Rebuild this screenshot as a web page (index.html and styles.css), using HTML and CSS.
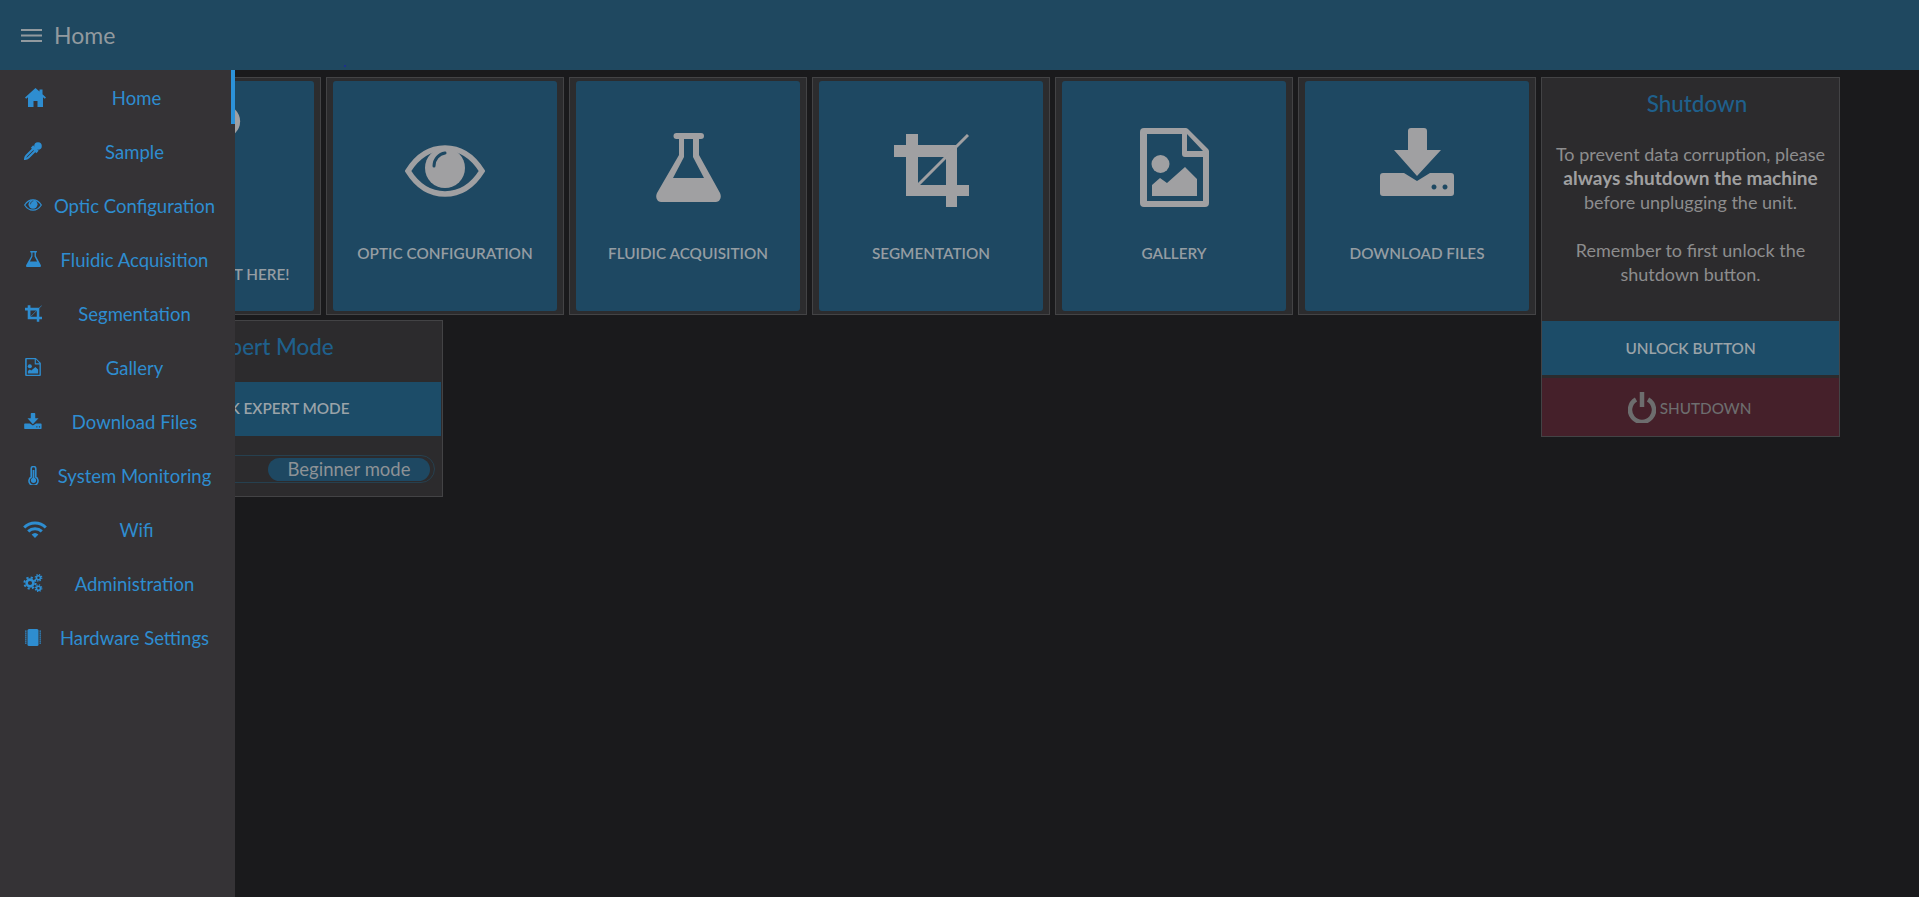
FILE: index.html
```html
<!DOCTYPE html>
<html lang="en">
<head>
<meta charset="utf-8">
<title>Home</title>
<link rel="stylesheet" href="styles.css">
</head>
<body>
<svg class="defs" width="0" height="0" aria-hidden="true">
  <symbol id="i-home" viewBox="0 0 21 19"><path d="M10.5 0L0 9.5l1.2 1.3L3 9.3V19h5.5v-6h4v6H18V9.3l1.8 1.5L21 9.5 17.5 6.3V1.5h-3v2.1z"/></symbol>
  <symbol id="i-dropper" viewBox="0 0 18 18"><circle cx="14" cy="4" r="3.8"/><path d="M8 4.5l5.500 5.500" fill="none" stroke="currentColor" stroke-width="3.200"/><path d="M9.500 6.500L2.500 13.500Q1 15 1 17Q3 17 4.500 15.500L11.500 8.500" fill="none" stroke="currentColor" stroke-width="2"/></symbol>
  <symbol id="i-eye" viewBox="0 0 80 52"><path d="M3 26C13 10 26 3 40 3s27 7 37 23C67 42 54 49 40 49S13 42 3 26Z" fill="none" stroke="currentColor" stroke-width="5.5"/><circle cx="40" cy="23" r="20"/><path d="M29 21c0-7 5-12 11-13" class="cut" fill="none" stroke-width="3" stroke-linecap="round"/></symbol>
  <symbol id="i-flask" viewBox="0 0 65 69"><path fill-rule="evenodd" d="M20 0h25a3 3 0 0 1 0 6h-2v16L64 60c2 4 0 9-4 9H5c-4 0-6-5-4-9L23 22V6h-2.500a3 3 0 0 1 0-6zM28 6v18L17 45h31L37 24V6z"/></symbol>
  <symbol id="i-crop" viewBox="0 0 75 73"><path fill-rule="evenodd" d="M12 0h12v11h39v40h12v11H63v11H52V62H12V23H0V11h12zM24 23v28h28V23z"/><path d="M74 1L24 51" fill="none" stroke="currentColor" stroke-width="3"/></symbol>
  <symbol id="i-file" viewBox="0 0 69 79"><path fill-rule="evenodd" d="M4 0h41a4 4 0 0 1 3 1L68 21a4 4 0 0 1 1 3v51a4 4 0 0 1-4 4H4a4 4 0 0 1-4-4V4a4 4 0 0 1 4-4zM7 6v67h56V29H45a3 3 0 0 1-3-3V6zM47 6v17h16z"/><circle cx="20.500" cy="36" r="9"/><path d="M12 68V57l8-7 7 5 18-16 12 12v17z"/></symbol>
  <symbol id="i-download" viewBox="0 0 75 68"><path d="M31 0h13a3 3 0 0 1 3 3v19h14L37 48 14 22h14V3a3 3 0 0 1 3-3z"/><path fill-rule="evenodd" d="M3 45h21l13 8 13-8h21a3 3 0 0 1 3 3v17a3 3 0 0 1-3 3H3a3 3 0 0 1-3-3V48a3 3 0 0 1 3-3zM54 56.500a2.500 2.500 0 1 0 .01 0zM65 56.500a2.500 2.500 0 1 0 .01 0z"/></symbol>
  <symbol id="i-thermo" viewBox="0 0 11 19"><path d="M3.200 2.800a2.300 2.300 0 0 1 4.600 0v8.200a4.500 4.500 0 1 1-4.600 0z" fill="none" stroke="currentColor" stroke-width="1.600"/><circle cx="5.500" cy="14.300" r="2.600"/><rect x="4.600" y="4" width="1.800" height="10"/></symbol>
  <symbol id="i-wifi" viewBox="0 0 24 17"><path d="M1.200 6.500a15.500 15.500 0 0 1 21.600 0M5.200 10.400a10 10 0 0 1 13.600 0" fill="none" stroke="currentColor" stroke-width="3"/><path d="M8.600 13.600a5 5 0 0 1 6.800 0L12 17z"/></symbol>
  <symbol id="i-cogs" viewBox="0 0 20 18"><g fill="none" stroke="currentColor"><circle cx="7" cy="9" r="3.400" stroke-width="2.600"/><circle cx="7" cy="9" r="5.600" stroke-width="2" stroke-dasharray="2.200 2.200"/><circle cx="15.500" cy="3.800" r="2" stroke-width="1.600"/><circle cx="15.500" cy="3.800" r="3.300" stroke-width="1.200" stroke-dasharray="1.300 1.300"/><circle cx="15.500" cy="14.200" r="2" stroke-width="1.600"/><circle cx="15.500" cy="14.200" r="3.300" stroke-width="1.200" stroke-dasharray="1.300 1.300"/></g></symbol>
  <symbol id="i-chip" viewBox="0 0 16 17"><rect x="2.500" width="11" height="17" rx="1.500"/><path d="M.8 1.500v14M15.200 1.500v14" fill="none" stroke="currentColor" stroke-width="1.500" stroke-dasharray="1.200 .8"/></symbol>
  <symbol id="i-power" viewBox="0 0 28 31"><path d="M8 7.500a12 12 0 1 0 12 0" fill="none" stroke="currentColor" stroke-width="4.500"/><path d="M14 0v15" fill="none" stroke="currentColor" stroke-width="4.500"/></symbol>
</svg>

<header class="topbar">
  <svg class="burger" viewBox="0 0 21 13"><path d="M0 1h21M0 6.500h21M0 12h21" fill="none" stroke="currentColor" stroke-width="2"/></svg>
  <span class="topbar-title">Home</span>
  <i class="speck"></i>
</header>

<main class="content">
  <a class="tile">
    <div class="tile-inner">
      <div class="tile-icon"><svg class="big b-dropper"><use href="#i-dropper"/></svg></div>
      <div class="tile-label">Sample<br>You must start here!</div>
    </div>
  </a>
  <a class="tile">
    <div class="tile-inner">
      <div class="tile-icon"><svg class="big b-eye"><use href="#i-eye"/></svg></div>
      <div class="tile-label">Optic Configuration</div>
    </div>
  </a>
  <a class="tile">
    <div class="tile-inner">
      <div class="tile-icon"><svg class="big b-flask"><use href="#i-flask"/></svg></div>
      <div class="tile-label">Fluidic Acquisition</div>
    </div>
  </a>
  <a class="tile">
    <div class="tile-inner">
      <div class="tile-icon"><svg class="big b-crop"><use href="#i-crop"/></svg></div>
      <div class="tile-label">Segmentation</div>
    </div>
  </a>
  <a class="tile">
    <div class="tile-inner">
      <div class="tile-icon"><svg class="big b-file"><use href="#i-file"/></svg></div>
      <div class="tile-label">Gallery</div>
    </div>
  </a>
  <a class="tile">
    <div class="tile-inner">
      <div class="tile-icon"><svg class="big b-download"><use href="#i-download"/></svg></div>
      <div class="tile-label">Download Files</div>
    </div>
  </a>

  <section class="panel shutdown">
    <h2 class="panel-title">Shutdown</h2>
    <p class="shutdown-text">To prevent data corruption, please<br><b>always shutdown the machine</b><br>before unplugging the unit.<br><br>Remember to first unlock the<br>shutdown button.</p>
    <div class="btn-stack">
      <button class="btn btn-blue btn-unlock">Unlock button</button>
      <button class="btn btn-red"><svg class="power"><use href="#i-power"/></svg>Shutdown</button>
    </div>
  </section>

  <section class="panel expert">
    <h2 class="panel-title">Expert Mode</h2>
    <button class="btn btn-blue btn-expert">Unlock expert mode</button>
    <div class="switch">
      <span class="switch-opt">Expert mode</span>
      <span class="switch-opt switch-on">Beginner mode</span>
    </div>
  </section>
</main>

<nav class="sidenav">
  <a class="nav-item active"><span class="nav-ico wide"><svg class="s-home"><use href="#i-home"/></svg></span><span class="nav-txt">Home</span></a>
  <a class="nav-item"><span class="nav-ico"><svg class="s-dropper"><use href="#i-dropper"/></svg></span><span class="nav-txt">Sample</span></a>
  <a class="nav-item"><span class="nav-ico"><svg class="s-eye"><use href="#i-eye"/></svg></span><span class="nav-txt">Optic Configuration</span></a>
  <a class="nav-item"><span class="nav-ico"><svg class="s-flask"><use href="#i-flask"/></svg></span><span class="nav-txt">Fluidic Acquisition</span></a>
  <a class="nav-item"><span class="nav-ico"><svg class="s-crop"><use href="#i-crop"/></svg></span><span class="nav-txt">Segmentation</span></a>
  <a class="nav-item"><span class="nav-ico"><svg class="s-file"><use href="#i-file"/></svg></span><span class="nav-txt">Gallery</span></a>
  <a class="nav-item"><span class="nav-ico"><svg class="s-download"><use href="#i-download"/></svg></span><span class="nav-txt">Download Files</span></a>
  <a class="nav-item"><span class="nav-ico"><svg class="s-thermo"><use href="#i-thermo"/></svg></span><span class="nav-txt">System Monitoring</span></a>
  <a class="nav-item"><span class="nav-ico wide"><svg class="s-wifi"><use href="#i-wifi"/></svg></span><span class="nav-txt">Wifi</span></a>
  <a class="nav-item"><span class="nav-ico"><svg class="s-cogs"><use href="#i-cogs"/></svg></span><span class="nav-txt">Administration</span></a>
  <a class="nav-item"><span class="nav-ico"><svg class="s-chip"><use href="#i-chip"/></svg></span><span class="nav-txt">Hardware Settings</span></a>
</nav>
</body>
</html>
```

FILE: styles.css
```css
* { box-sizing: border-box; }

html, body { height: 100%; }

body {
  margin: 0;
  background: #1a1a1c;
  color: #959596;
  font-family: Lato, "Open Sans", "Liberation Sans", sans-serif;
  overflow: hidden;
  fill: currentColor;
  --cut: #1e4862;
}

.defs { position: absolute; }

.cut { stroke: var(--cut); }

.topbar {
  position: relative;
  height: 70px;
  display: flex;
  align-items: center;
  padding-left: 21px;
  background: #1f4860;
  color: #929a9f;
}

.burger { width: 21px; height: 13px; margin-top: 1px; }

.topbar-title { margin: 1px 0 0 12px; font-size: 23px; line-height: 1; }

.speck {
  position: absolute;
  left: 344px;
  top: 65px;
  width: 2px;
  height: 2px;
  background: #1d2f8f;
}

.content {
  display: grid;
  grid-template-columns: repeat(6, 238px) 299px;
  grid-template-rows: 238px 177px;
  gap: 5px;
  padding: 7px 0 0 83px;
}

.tile {
  display: block;
  height: 238px;
  padding: 3px 6px;
  background: #2c2c2e;
  border: 1px solid #434345;
}

.tile-inner {
  height: 100%;
  background: #1e4862;
  border-radius: 3px;
  text-align: center;
}

.tile-icon {
  height: 162px;
  display: flex;
  justify-content: center;
  color: #a0a0a2;
}

.big { display: block; flex: none; }
.b-dropper { width: 78px; height: 78px; margin-top: 23px; }
.b-eye { width: 80px; height: 52px; margin-top: 64px; }
.b-flask { width: 65px; height: 69px; margin-top: 52px; }
.b-crop { width: 75px; height: 73px; margin-top: 53px; }
.b-file { width: 69px; height: 79px; margin-top: 47px; }
.b-download { width: 75px; height: 68px; margin-top: 47px; }

.tile-label {
  font-size: 15.300px;
  line-height: 21px;
  font-weight: 600;
  text-transform: uppercase;
  color: #959da2;
}

.panel {
  background: #2c2b2d;
  border: 1px solid #434345;
}

.panel-title {
  margin: 0;
  padding-left: 13px;
  font-size: 22.400px;
  line-height: 26px;
  font-weight: 500;
  text-align: center;
  color: #1f608c;
}

.shutdown {
  grid-column: 7;
  grid-row: 1 / span 2;
  height: 360px;
  display: flex;
  flex-direction: column;
  padding: 13px 0 0;
}

.shutdown-text {
  margin: 25px 0 0;
  font-size: 18px;
  line-height: 24px;
  text-align: center;
  color: #8d8d8e;
}

.shutdown-text b { color: #a0a0a1; font-weight: 700; font-size: 19px; }

.btn-stack {
  margin-top: auto;
  display: flex;
  flex-direction: column;
  gap: 3px;
}

.btn {
  display: flex;
  align-items: center;
  justify-content: center;
  width: 100%;
  border: 0;
  padding: 0;
  font-family: inherit;
  font-size: 15.300px;
  font-weight: 600;
  text-transform: uppercase;
}

.btn-blue { background: #1c4c68; color: #9aa3a8; }
.btn-unlock { height: 54px; }

.btn-red {
  height: 58px;
  padding-top: 2px;
  background: #45202a;
  color: #6d6d6e;
  font-weight: 500;
}

.power { width: 28px; height: 31px; margin: -2px 4px 0 -2px; }

.expert {
  grid-column: 1 / span 2;
  grid-row: 2;
  width: 360px;
  padding-top: 13px;
}

.btn-expert {
  width: calc(100% - 2px);
  height: 54px;
  margin: 22px 1px 0;
  padding-bottom: 2px;
}

.switch {
  display: flex;
  align-items: center;
  justify-content: space-between;
  height: 28px;
  margin: 19px 7px 0 8px;
  padding: 0 4px 0 2px;
  border: 1px solid #26404f;
  border-radius: 14px;
}

.switch-opt {
  flex: 0 0 162px;
  height: 23px;
  line-height: 22px;
  border-radius: 12px;
  font-size: 18.500px;
  text-align: center;
  color: #8d9296;
}

.switch-on { background: #1e4862; }

.sidenav {
  position: fixed;
  left: 0;
  top: 70px;
  bottom: 0;
  width: 235px;
  background: #353336;
  color: #2e8dd0;
}

.nav-item {
  display: flex;
  align-items: center;
  height: 54px;
  padding: 0 16px 0 20px;
}

.nav-item.active { box-shadow: inset -4px 0 0 #2c92d9; }

.nav-ico {
  flex: 0 0 26px;
  margin-right: 4px;
  display: flex;
  justify-content: center;
}

.nav-ico.wide { flex-basis: 30px; }

.nav-ico svg { display: block; }

.s-home { width: 21px; height: 19px; }
.s-dropper { width: 18px; height: 18px; }
.s-eye { width: 18px; height: 12px; --cut: #353336; }
.s-flask { width: 15px; height: 16px; }
.s-crop { width: 17px; height: 17px; }
.s-file { width: 16px; height: 18px; }
.s-download { width: 18px; height: 16px; }
.s-thermo { width: 11px; height: 19px; }
.s-wifi { width: 24px; height: 17px; }
.s-cogs { width: 20px; height: 18px; }
.s-chip { width: 16px; height: 17px; }

.nav-txt {
  flex: 1;
  padding-top: 1px;
  text-align: center;
  font-size: 18.500px;
  white-space: nowrap;
}
```
